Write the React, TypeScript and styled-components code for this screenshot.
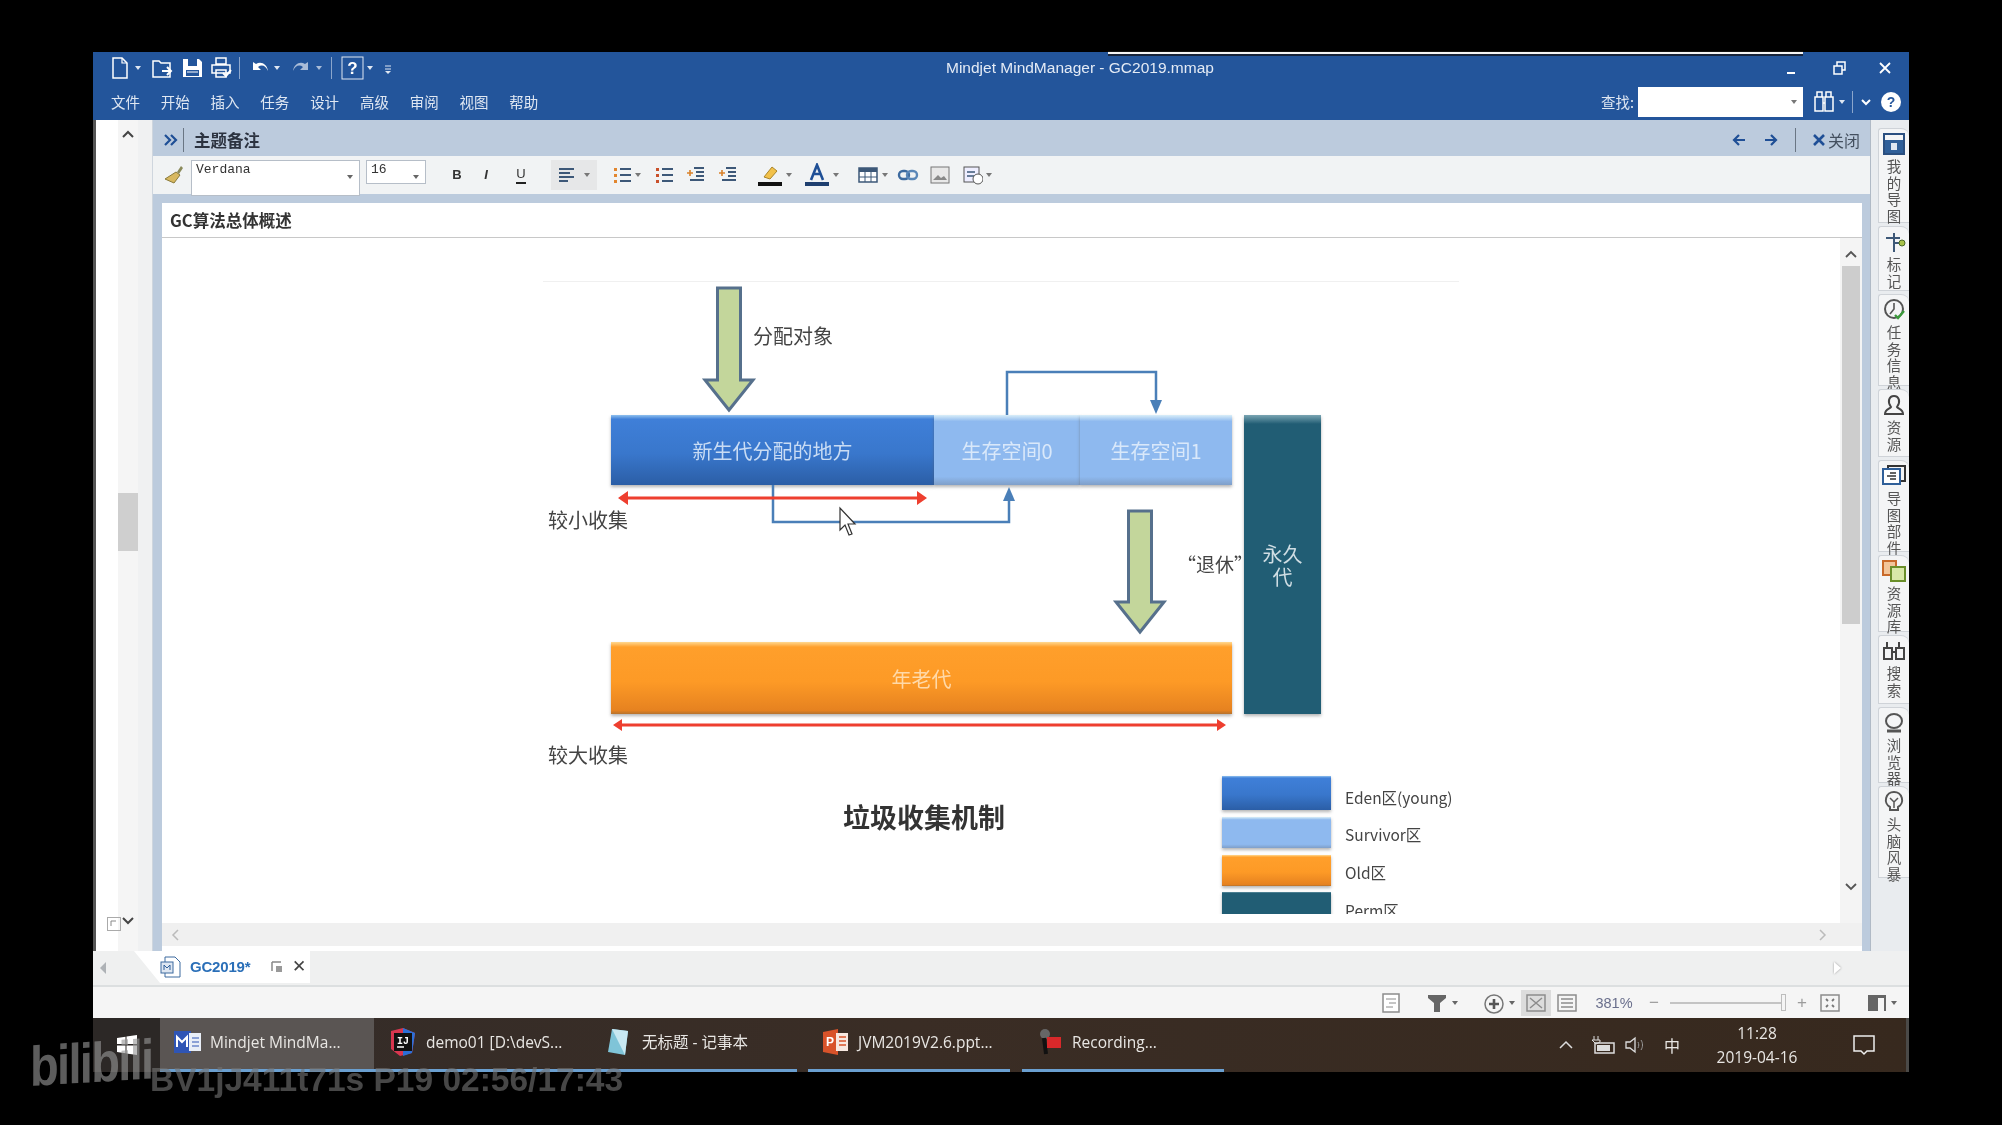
import React from 'react';
import styled, { createGlobalStyle } from 'styled-components';

const GlobalStyle = createGlobalStyle`
  html, body { margin: 0; padding: 0; background: #000; }
  body { width: 2002px; height: 1125px; overflow: hidden; font-family: "Liberation Sans", "Noto Sans CJK SC", sans-serif; }
`;

const CJK = `"Noto Sans CJK SC", "Liberation Sans", sans-serif`;

const Screen = styled.div`
  position: relative;
  width: 2002px;
  height: 1125px;
  padding: 52px 93px 53px 93px;
  box-sizing: border-box;
  background: #000;
  filter: blur(0.55px);
`;

const Win = styled.div`
  width: 1816px;
  height: 1020px;
  display: flex;
  flex-direction: column;
  background: #f2f3f3;
`;

const TopStripe = styled.div`
  position: absolute;
  left: 1108px;
  top: 51px;
  width: 695px;
  height: 5px;
  box-sizing: border-box;
  background: #f4f4f4;
  border-top: 1px solid #111;
  border-bottom: 2px solid #16233a;
`;

/* ---------- title and menu ---------- */
const TitleBar = styled.div`
  position: relative;
  height: 32px;
  flex: none;
  background: #23559b;
  display: flex;
  align-items: center;
  padding-left: 15px;
  color: #fff;
`;

const TitleText = styled.div`
  position: absolute;
  left: 853px;
  top: 6px;
  font: 15.5px/20px "Liberation Sans", sans-serif;
  color: #e4ebf5;
`;

const WinControls = styled.div`
  margin-left: auto;
  display: flex;
  align-items: center;
  gap: 28px;
  padding-right: 16px;
`;

const MenuBar = styled.div`
  height: 36px;
  flex: none;
  background: #23559b;
  display: flex;
  align-items: center;
  padding-left: 18px;
  padding-right: 8px;
`;

const MenuItem = styled.div`
  width: 49.8px;
  margin-right: 16.6px;
  flex: none;
  text-align: left;
  font: 14.5px/20px ${CJK};
  color: #dfe7f2;
  white-space: nowrap;
  & { width: 33.2px; }
`;

const FindLabel = styled.div`
  margin-left: auto;
  font: 14.5px/20px ${CJK};
  color: #dfe7f2;
`;

const FindBox = styled.div`
  width: 165px;
  height: 30px;
  margin-left: 4px;
  background: #fff;
  display: flex;
  align-items: center;
  justify-content: flex-end;
  padding-right: 6px;
  box-sizing: border-box;
`;

const Tri = styled.span<{ $c?: string; $ml?: number }>`
  display: inline-block;
  flex: none;
  width: 0;
  height: 0;
  margin-left: ${p => p.$ml ?? 0}px;
  border-left: 3.5px solid transparent;
  border-right: 3.5px solid transparent;
  border-top: 4px solid ${p => p.$c ?? '#dfe7f2'};
`;

const BarSep = styled.span<{ $c?: string; $h?: number; $mx?: number }>`
  display: inline-block;
  flex: none;
  width: 1px;
  height: ${p => p.$h ?? 22}px;
  margin: 0 ${p => p.$mx ?? 6}px;
  background: ${p => p.$c ?? '#8ba6cc'};
`;

/* ---------- main row ---------- */
const MainRow = styled.div`
  height: 831px;
  flex: none;
  display: flex;
  background: #e9ecef;
`;

const LeftRail = styled.div`
  width: 59px;
  flex: none;
  display: flex;
  background: #fff;
  border-left: 3px solid #555;
  box-sizing: border-box;
`;

const RailWhite = styled.div`
  width: 22px;
  flex: none;
  background: #fff;
`;

const RailTrack = styled.div`
  width: 20px;
  flex: none;
  position: relative;
  background: #f5f5f5;
  display: flex;
  flex-direction: column;
  align-items: center;
  padding-top: 8px;
  box-sizing: border-box;
`;

const RailThumb = styled.div`
  width: 20px;
  height: 58px;
  margin-top: 353px;
  background: #cfcfcf;
`;

const RailFoot = styled.div`
  margin-top: auto;
  padding-bottom: 24px;
`;

const RailCorner = styled.div`
  position: absolute;
  left: -20px;
  bottom: 0;
  width: 32px;
  height: 34px;
  display: flex;
  flex-direction: column;
  align-items: center;
  gap: 8px;
  color: #555;
  font: 11px/10px "Liberation Sans", sans-serif;
`;

const RailGap = styled.div`
  flex: 1;
  background: #f0f1f2;
`;

const NotePanel = styled.div`
  width: 1718px;
  flex: none;
  display: flex;
  flex-direction: column;
  background: #bccbdd;
  border-left: 1px solid #cfd6de;
  box-sizing: border-box;
`;

const NoteHeader = styled.div`
  height: 36px;
  flex: none;
  display: flex;
  align-items: center;
  padding: 3px 10px 0 10px;
  box-sizing: border-box;
  background: #bccbdd;
`;

const NoteHeading = styled.div`
  font: 700 16.5px/22px ${CJK};
  color: #2c3340;
  margin-left: 6px;
`;

const HeaderRight = styled.div`
  margin-left: auto;
  display: flex;
  align-items: center;
  gap: 16px;
  color: #44505f;
  font: 16px/20px ${CJK};
`;

const CloseGroup = styled.div`
  display: flex;
  align-items: center;
  gap: 2px;
`;

const FormatBar = styled.div`
  height: 38px;
  flex: none;
  display: flex;
  align-items: center;
  padding-left: 10px;
  background: #f1f3f4;
`;

const Select = styled.div<{ $w: number; $h: number }>`
  width: ${p => p.$w}px;
  height: ${p => p.$h}px;
  align-self: flex-start;
  margin-top: 4px;
  flex: none;
  box-sizing: border-box;
  position: relative;
  background: #fff;
  border: 1px solid #b6bec8;
  padding: 1px 4px;
  font: 13px/16px "Liberation Mono", monospace;
  color: #333;
`;

const SelectCaret = styled(Tri)`
  position: absolute;
  right: 6px;
  top: 14px;
`;

const Slot = styled.span<{ $w?: number; $ml?: number; $bg?: string }>`
  flex: none;
  display: inline-flex;
  align-items: center;
  justify-content: center;
  gap: 6px;
  width: ${p => p.$w ?? 20}px;
  height: 30px;
  margin-left: ${p => p.$ml ?? 0}px;
  background: ${p => p.$bg ?? 'transparent'};
`;

const FmtLetter = styled.span<{ $b?: boolean; $i?: boolean; $u?: boolean }>`
  font: ${p => (p.$b ? 700 : 400)} 13px/16px "Liberation Sans", sans-serif;
  font-style: ${p => (p.$i ? 'italic' : 'normal')};
  font-weight: ${p => (p.$i || p.$b ? 700 : 400)};
  color: #333;
  border-bottom: ${p => (p.$u ? '2px solid #222' : 'none')};
`;

const NoteCard = styled.div`
  margin: 9px 8px 0 9px;
  flex: 1;
  min-height: 0;
  display: flex;
  flex-direction: column;
  background: #fff;
`;

const NoteTitle = styled.div`
  height: 35px;
  flex: none;
  box-sizing: border-box;
  border-bottom: 1px solid #c8c8c8;
  padding: 6px 0 0 8px;
  font: 700 16.5px/22px ${CJK};
  color: #333;
`;

const NoteBodyRow = styled.div`
  height: 685px;
  flex: none;
  display: flex;
`;

const DiagramClip = styled.div`
  flex: 1;
  height: 676px;
  overflow: hidden;
`;

const Canvas = styled.div`
  position: relative;
  width: 1678px;
  height: 676px;
`;

const VScroll = styled.div`
  width: 22px;
  flex: none;
  display: flex;
  flex-direction: column;
  align-items: center;
  padding: 10px 0 6px;
  box-sizing: border-box;
  background: #f4f4f4;
`;

const VThumb = styled.div`
  width: 18px;
  height: 358px;
  margin-top: 6px;
  background: #cdcdcd;
`;

const HScroll = styled.div`
  height: 23px;
  flex: none;
  display: flex;
  align-items: center;
  justify-content: space-between;
  padding: 0 34px 0 8px;
  background: #f0f0f0;
`;

/* ---------- diagram parts, placed on the free canvas ---------- */
const OX = 162;
const OY = 238;

const Box = styled.div<{ $x: number; $y: number; $w: number; $h: number; $kind: string }>`
  position: absolute;
  left: ${p => p.$x - OX}px;
  top: ${p => p.$y - OY}px;
  width: ${p => p.$w}px;
  height: ${p => p.$h}px;
  display: flex;
  align-items: center;
  justify-content: center;
  text-align: center;
  font: 20px/23px ${CJK};
  box-shadow: 0 2px 3px rgba(90, 90, 90, 0.45);
  ${p =>
    p.$kind === 'eden' &&
    `background: linear-gradient(#8fc0ee 0, #3f7fd8 6%, #3977cc 55%, #2b5ea6 100%); color: #c9dcf4;`}
  ${p =>
    p.$kind === 'surv' &&
    `background: linear-gradient(#d9eef8 0, #8eb9ef 9%, #8eb9ef 88%, #7f9fc9 100%); color: #d9e8fa;`}
  ${p =>
    p.$kind === 'old' &&
    `background: linear-gradient(#ffd890 0, #ff9f2b 7%, #fd9a26 55%, #e68220 95%, #b7722c 100%); color: #ffd9a8;`}
  ${p =>
    p.$kind === 'perm' &&
    `background: linear-gradient(#7aa5b3 0, #215d74 3%, #215d74 100%); color: #cfdde3;`}
`;

const DiagramText = styled.div<{ $x: number; $y: number; $s?: number; $c?: string; $b?: boolean }>`
  position: absolute;
  left: ${p => p.$x - OX}px;
  top: ${p => p.$y - OY}px;
  font: ${p => (p.$b ? 600 : 400)} ${p => p.$s ?? 20}px/1 ${CJK};
  color: ${p => p.$c ?? '#444'};
  white-space: nowrap;
  transform: translateY(-50%);
`;

const Overlay = styled.svg`
  position: absolute;
  left: 0;
  top: 0;
  width: 1678px;
  height: 676px;
`;

const FaintRule = styled.div`
  position: absolute;
  left: ${543 - OX}px;
  top: ${281 - OY}px;
  width: 916px;
  height: 1px;
  background: #f0f0f0;
`;

/* ---------- right dock ---------- */
const RightDock = styled.div`
  flex: 1;
  display: flex;
  flex-direction: column;
  padding: 8px 0 0 7px;
  gap: 3px;
  background: #e9ecef;
  border-left: 1px solid #b0bac6;
`;

const DockTab = styled.div<{ $h: number }>`
  height: ${p => p.$h}px;
  box-sizing: border-box;
  background: #f4f5f6;
  border: 1px solid #cfd3d8;
  border-right: none;
  border-radius: 3px 8px 0 0;
  display: flex;
  flex-direction: column;
  align-items: center;
  padding-top: 3px;
  gap: 2px;
`;

const DockText = styled.div`
  width: 15px;
  font: 14.5px/16.5px ${CJK};
  color: #555;
  text-align: center;
`;

/* ---------- tabs and status ---------- */
const TabStrip = styled.div`
  height: 36px;
  flex: none;
  display: flex;
  align-items: flex-start;
  box-sizing: border-box;
  border-bottom: 2px solid #dcdfe0;
  background: #eff0f0;
  padding-left: 7px;
`;

const StripArrow = styled.div`
  width: 0;
  height: 0;
  margin-top: 11px;
  border-top: 6px solid transparent;
  border-bottom: 6px solid transparent;
  border-right: 6px solid #aeb2b6;
`;

const DocTab = styled.div`
  margin-left: 28px;
  width: 176px;
  height: 32px;
  display: flex;
  align-items: center;
  padding-left: 26px;
  box-sizing: border-box;
  background: #fff;
  clip-path: polygon(0 0, 100% 0, 100% 100%, 26px 100%);
  gap: 8px;
`;

const DocName = styled.div`
  font: 700 15px/18px "Liberation Sans", sans-serif;
  color: #2a6fb8;
  letter-spacing: -0.2px;
  margin-right: 12px;
`;

const TabClose = styled.div`
  font: 17px/18px "Liberation Sans", sans-serif;
  color: #444;
`;

const StripRight = styled.div`
  margin-left: auto;
  margin-right: 68px;
  margin-top: 11px;
  width: 0;
  height: 0;
  border-top: 6px solid transparent;
  border-bottom: 6px solid transparent;
  border-left: 7px solid #fff;
  filter: drop-shadow(0 0 1px #999);
`;

const StatusBar = styled.div`
  height: 31px;
  flex: none;
  display: flex;
  align-items: center;
  justify-content: flex-end;
  padding-right: 8px;
  background: #f5f5f5;
`;

const StatusSlot = styled.span<{ $w: number; $on?: boolean }>`
  width: ${p => p.$w}px;
  height: 26px;
  flex: none;
  display: inline-flex;
  align-items: center;
  justify-content: center;
  gap: 4px;
  background: ${p => (p.$on ? '#dcdcdc' : 'transparent')};
  color: #9c9c9c;
  font: 17px/20px "Liberation Sans", sans-serif;
`;

const ZoomText = styled.span`
  width: 62px;
  text-align: center;
  font: 14.5px/20px "Liberation Sans", sans-serif;
  color: #6a6f8c;
`;

const ZoomTrack = styled.div`
  width: 114px;
  height: 2px;
  position: relative;
  background: #c4c4c4;
  margin: 0 7px;
`;

const ZoomKnob = styled.div`
  position: absolute;
  right: -2px;
  top: -8px;
  width: 5px;
  height: 17px;
  box-sizing: border-box;
  background: #f5f5f5;
  border: 1px solid #bdbdbd;
`;

/* ---------- taskbar ---------- */
const Taskbar = styled.div`
  height: 54px;
  flex: none;
  display: flex;
  background: linear-gradient(90deg, #332c29 0, #3a2d25 45%, #37291e 100%);
  border-right: 3px solid #4b4a48;
  box-sizing: border-box;
  color: #e8e6e3;
`;

const StartBtn = styled.div`
  width: 67px;
  flex: none;
  display: flex;
  align-items: center;
  justify-content: center;
  background: #2c2826;
`;

const TaskItem = styled.div<{ $w: number; $active?: boolean; $line?: boolean; $ml?: number }>`
  width: ${p => p.$w}px;
  flex: none;
  margin-left: ${p => p.$ml ?? 0}px;
  box-sizing: border-box;
  display: flex;
  align-items: center;
  gap: 8px;
  padding: 0 0 3px 14px;
  background: ${p => (p.$active ? '#5a5553' : 'transparent')};
  border-bottom: 3px solid ${p => (p.$line ? '#6a9fd0' : 'transparent')};
  font: 15.5px/20px "Open Sans", "Noto Sans CJK SC", sans-serif;
  white-space: nowrap;
`;

const Tray = styled.div`
  margin-left: auto;
  display: flex;
  align-items: center;
  padding-right: 30px;
`;

const ImeLabel = styled.div`
  font: 16px/20px ${CJK};
  margin: 0 24px 0 16px;
`;

const Clock = styled.div`
  width: 106px;
  text-align: center;
  font: 15.5px/24px "Open Sans", sans-serif;
  margin-right: 42px;
`;

/* ---------- bilibili watermark ---------- */
const WmLogo = styled.div`
  position: absolute;
  left: 30px;
  top: 1036px;
  font: 700 56px/62px "Liberation Sans", sans-serif;
  letter-spacing: -2px;
  color: rgba(150, 150, 150, 0.62);
  transform: scaleX(0.84) skewY(-3deg);
  transform-origin: left center;
`;

const WmText = styled.div`
  position: absolute;
  left: 150px;
  top: 1061px;
  font: 700 33.5px/38px "Liberation Sans", sans-serif;
  color: rgba(115, 115, 115, 0.62);
  white-space: nowrap;
`;

/* ---------- icons ---------- */
const Ico = styled.svg<{ $ml?: number }>`
  flex: none;
  display: block;
  margin-left: ${p => p.$ml ?? 0}px;
`;

type IcoProps = { s?: number; ml?: number; children: React.ReactNode; w?: number };
const I = ({ s = 20, w, ml, children }: IcoProps) => (
  <Ico $ml={ml} width={w ?? s} height={s} viewBox={`0 0 ${w ?? s} ${s}`} fill="none">
    {children}
  </Ico>
);

const ListIcon = ({ kind }: { kind: 'num' | 'dot' | 'in' | 'out' }) => (
  <I s={20}>
    <path d={kind === 'in' || kind === 'out' ? 'M8 3h10M10 7h8M10 11h8M4 15h14' : 'M8 4h11M8 10h11M8 16h11'} stroke="#3d5878" strokeWidth="2" />
    {kind === 'num' && <path d="M2 3h3v3H2zM2 9h3v3H2zM2 15h3v3H2z" fill="#e2862e" />}
    {kind === 'dot' && <path d="M2 3h3v3H2zM2 9h3v3H2zM2 15h3v3H2z" fill="#c9502a" />}
    {(kind === 'in' || kind === 'out') && <path d="M1 8h6M4 5v6" stroke="#d9822b" strokeWidth="1.6" />}
  </I>
);

const Arrow = ({ x, top, bottom, shaft = 23, head = 48, headH = 30 }: { x: number; top: number; bottom: number; shaft?: number; head?: number; headH?: number }) => {
  const cx = x - OX;
  const t = top - OY;
  const b = bottom - OY;
  const pts = [
    [cx - shaft / 2, t],
    [cx + shaft / 2, t],
    [cx + shaft / 2, b - headH],
    [cx + head / 2, b - headH],
    [cx, b],
    [cx - head / 2, b - headH],
    [cx - shaft / 2, b - headH],
  ];
  return <polygon points={pts.map(p => p.join(',')).join(' ')} fill="#c3d69b" stroke="#56708c" strokeWidth="3" />;
};

const P = (x: number, y: number) => `${x - OX} ${y - OY}`;

const DOCK = [
  { h: 95, t: '我的导图', i: <><rect x="2" y="2" width="20" height="20" stroke="#2a4f80" strokeWidth="2" /><rect x="3" y="8" width="18" height="13" fill="#2f5f99" /><rect x="9" y="11" width="6" height="7" fill="#dfe7f2" /></> },
  { h: 65, t: '标记', i: <><path d="M4 8h14M12 3v19M12 13h8" stroke="#3d5878" strokeWidth="2" /><circle cx="20" cy="13" r="3" fill="#a8c24a" stroke="#4a6a2a" /></> },
  { h: 92, t: '任务信息', i: <><circle cx="12" cy="11" r="9" stroke="#555" strokeWidth="2" /><path d="M12 5v6l-4 5" stroke="#555" strokeWidth="1.6" /><path d="M13 17l3 3 6-7" stroke="#3a9a3a" strokeWidth="2.4" /></> },
  { h: 68, t: '资源', i: <path d="M3 21c0-5 5-5 6-7-4-5-2-11 3-11s7 6 3 11c1 2 6 2 6 7z" stroke="#444" strokeWidth="2" /> },
  { h: 92, t: '导图部件', i: <><rect x="6" y="2" width="17" height="15" stroke="#333" strokeWidth="2" /><rect x="1" y="5" width="17" height="15" fill="#fff" stroke="#2f5f99" strokeWidth="2" /><path d="M5 12h9M8 9h6M8 15h6" stroke="#333" strokeWidth="1.5" /></> },
  { h: 77, t: '资源库', i: <><rect x="1" y="2" width="13" height="14" fill="#f2c59a" stroke="#c96a2a" strokeWidth="2" /><rect x="9" y="8" width="14" height="14" fill="#d8e8a8" stroke="#6a8f2a" strokeWidth="2" /></> },
  { h: 69, t: '搜索', i: <path d="M5 3v5M17 3v5M2 9h8v11H2zM14 9h8v11h-8zM10 13h4" stroke="#444" strokeWidth="2" /> },
  { h: 76, t: '浏览器', i: <><ellipse cx="12" cy="10" rx="8" ry="7" stroke="#555" strokeWidth="2" /><path d="M5 20h14" stroke="#555" strokeWidth="3" /></> },
  { h: 92, t: '头脑风暴', i: <><path d="M12 2a8 8 0 0 0-4 15v3h8v-3a8 8 0 0 0-4-15z" stroke="#555" strokeWidth="2" /><path d="M8 8l4 4 4-4M12 12v6" stroke="#555" strokeWidth="1.5" /></> },
];

const MENUS = ['文件', '开始', '插入', '任务', '设计', '高级', '审阅', '视图', '帮助'];

export default function App() {
  return (
    <Screen>
      <GlobalStyle />
      <Win>
        <TitleBar>
          <I s={24}><path d="M5 2h9l5 5v15H5z" stroke="#fff" strokeWidth="1.5" /><path d="M14 2v5h5" stroke="#fff" strokeWidth="1.2" /></I>
          <Tri $ml={3} />
          <I s={24} ml={9}><path d="M3 5h6l2 2h9v14H3z" stroke="#fff" strokeWidth="1.5" /><path d="M12 15h9M17 11l4 4-4 4" stroke="#fff" strokeWidth="2" /></I>
          <I s={24} ml={6}><path d="M3 3h16l3 3v15H3z" fill="#fff" /><rect x="8" y="3" width="9" height="7" fill="#23559b" /><rect x="6" y="14" width="13" height="6" fill="#23559b" /><path d="M7 16h11" stroke="#fff" /></I>
          <I s={24} ml={5}><path d="M7 2h10v6H7zM3 9h18v8H3zM7 14h10v7H7z" fill="#23559b" stroke="#fff" strokeWidth="1.5" /><path d="M14 17l3 3 5-6" stroke="#fff" strokeWidth="2" /></I>
          <BarSep $mx={6} />
          <I s={22} ml={2}><path d="M5 5v8h8l-3-3c4-3 8-1 10 4-1-7-7-10-12-7z" fill="#fff" /></I>
          <Tri $ml={4} />
          <I s={22} ml={10}><path d="M18 5v8h-8l3-3C9 7 5 9 3 14c1-7 7-10 12-7z" fill="#a9bcd8" /></I>
          <Tri $ml={4} $c="#a9bcd8" />
          <BarSep $mx={9} />
          <I s={24}><rect x="1" y="1" width="21" height="22" stroke="#dfe7f2" /><text x="11.5" y="18" fontFamily="Liberation Sans" fontWeight="700" fontSize="17" fill="#fff" textAnchor="middle">?</text></I>
          <Tri $ml={2} />
          <I s={12} w={8} ml={11}><path d="M1 4h6M1 7h6" stroke="#dfe7f2" /><path d="M1 9l3 3 3-3" fill="#dfe7f2" /></I>
          <TitleText>Mindjet MindManager - GC2019.mmap</TitleText>
          <WinControls>
            <I s={16}><path d="M4 13h8" stroke="#fff" strokeWidth="2" /></I>
            <I s={16} ml={4}><path d="M3 6h8v8H3zM6 6V2h8v8h-3" stroke="#fff" strokeWidth="1.5" /></I>
            <I s={16} ml={2}><path d="M3 3l10 10M13 3L3 13" stroke="#fff" strokeWidth="1.8" /></I>
          </WinControls>
        </TitleBar>
        <MenuBar>
          {MENUS.map(m => (
            <MenuItem key={m}>{m}</MenuItem>
          ))}
          <FindLabel>查找:</FindLabel>
          <FindBox><Tri $c="#777" /></FindBox>
          <I s={24} ml={9}><path d="M5 2h5v5H5zM14 2h5v5h-5zM3 7h8v14H3zM13 7h8v14h-8zM11 13h2" stroke="#fff" strokeWidth="1.5" /></I>
          <Tri $ml={3} />
          <BarSep $mx={7} />
          <I s={12}><path d="M2 4l4 4 4-4" stroke="#fff" strokeWidth="2" /></I>
          <I s={20} ml={9}><circle cx="10" cy="10" r="10" fill="#fff" /><text x="10" y="15" fontFamily="Liberation Sans" fontWeight="700" fontSize="14" fill="#23559b" textAnchor="middle">?</text></I>
        </MenuBar>
        <MainRow>
          <LeftRail>
            <RailWhite />
            <RailTrack>
              <I s={12}><path d="M1 9l5-5 5 5" stroke="#444" strokeWidth="2" /></I>
              <RailThumb />
              <RailFoot><I s={12}><path d="M1 3l5 5 5-5" stroke="#444" strokeWidth="2" /></I></RailFoot>
              <RailCorner>
                <I s={14}><rect x="0.5" y="0.5" width="13" height="13" stroke="#aaa" /><path d="M4 9V4h5" stroke="#888" /></I>
              </RailCorner>
            </RailTrack>
            <RailGap />
          </LeftRail>
          <NotePanel>
            <NoteHeader>
              <I s={16}><path d="M2 3l5 5-5 5M8 3l5 5-5 5" stroke="#1f4f96" strokeWidth="2.2" /></I>
              <BarSep $c="#6a7684" $h={24} $mx={4} />
              <NoteHeading>主题备注</NoteHeading>
              <HeaderRight>
                <I s={16}><path d="M14 8H3M8 3L3 8l5 5" stroke="#1f4f96" strokeWidth="2.2" /></I>
                <I s={16}><path d="M2 8h11M8 3l5 5-5 5" stroke="#1f4f96" strokeWidth="2.2" /></I>
                <BarSep $c="#6a7684" $h={24} $mx={0} />
                <CloseGroup>
                  <I s={14}><path d="M2 2l10 10M12 2L2 12" stroke="#1f4f96" strokeWidth="2.6" /></I>
                  <span>关闭</span>
                </CloseGroup>
              </HeaderRight>
            </NoteHeader>
            <FormatBar>
              <I s={22}><path d="M14 8l4-6 2 2-4 6z" fill="#8a8a5a" /><path d="M13 8l4 3-6 8-9-4z" fill="#d8b860" stroke="#8a7a3a" /></I>
              <Slot $w={6} />
              <Select $w={169} $h={36}>Verdana<SelectCaret $c="#666" /></Select>
              <Slot $w={6} />
              <Select $w={60} $h={24}>16<SelectCaret $c="#666" /></Select>
              <Slot $ml={21}><FmtLetter $b>B</FmtLetter></Slot>
              <Slot $ml={9}><FmtLetter $i>I</FmtLetter></Slot>
              <Slot $ml={15}><FmtLetter $u>U</FmtLetter></Slot>
              <Slot $ml={20} $w={46} $bg="#e6e7e8">
                <I s={20}><path d="M1 4h15M1 8h11M1 12h15M1 16h9" stroke="#3d5878" strokeWidth="2" /></I>
                <Tri $c="#777" />
              </Slot>
              <Slot $ml={15}><ListIcon kind="num" /></Slot>
              <Tri $ml={3} $c="#777" />
              <Slot $ml={13}><ListIcon kind="dot" /></Slot>
              <Slot $ml={12}><ListIcon kind="in" /></Slot>
              <Slot $ml={12}><ListIcon kind="out" /></Slot>
              <Slot $ml={22}><I s={24}><path d="M6 14l8-10 5 4-7 8z" fill="#f2c14a" stroke="#a9852a" /><rect x="0" y="19" width="24" height="4" fill="#111" /></I></Slot>
              <Tri $ml={6} $c="#777" />
              <Slot $ml={15}><I s={24}><path d="M6 17L12 2l6 15M8.500 11h7" stroke="#1f4f96" strokeWidth="2.6" /><rect x="0" y="19" width="24" height="4" fill="#1f3f6f" /></I></Slot>
              <Tri $ml={6} $c="#777" />
              <Slot $ml={19}><I s={20}><path d="M1 3h18v14H1z" fill="#fff" stroke="#3d5878" strokeWidth="1.500" /><path d="M1 3h18v4H1z" fill="#3d5878" /><path d="M7 7v10M13 7v10M1 12h18" stroke="#3d5878" /></I></Slot>
              <Tri $ml={4} $c="#777" />
              <Slot $ml={10}><I s={22}><rect x="2" y="7" width="10" height="8" rx="4" stroke="#3d6a9f" strokeWidth="2.400" /><rect x="10" y="7" width="10" height="8" rx="4" stroke="#5a87b8" strokeWidth="2.400" /></I></Slot>
              <Slot $ml={12}><I s={20}><rect x="1" y="2" width="18" height="16" fill="#e8e8e8" stroke="#777" /><path d="M3 15l5-5 3 3 3-2 3 4z" fill="#888" /></I></Slot>
              <Slot $ml={13}><I s={20}><rect x="1" y="2" width="15" height="15" fill="#eef" stroke="#555" /><path d="M4 7h8M4 11h8" stroke="#3d5878" strokeWidth="1.500" /><circle cx="15" cy="14" r="5" fill="#fff" stroke="#555" /></I></Slot>
              <Tri $ml={3} $c="#777" />
            </FormatBar>
            <NoteCard>
              <NoteTitle>GC算法总体概述</NoteTitle>
              <NoteBodyRow>
                <DiagramClip>
                  <Canvas>
                    <FaintRule />
                    <Box $kind="eden" $x={611} $y={415} $w={323} $h={70}>新生代分配的地方</Box>
                    <Box $kind="surv" $x={934} $y={415} $w={146} $h={70}>生存空间0</Box>
                    <Box $kind="surv" $x={1080} $y={415} $w={152} $h={70}>生存空间1</Box>
                    <Box $kind="perm" $x={1244} $y={415} $w={77} $h={299}>永久<br />代</Box>
                    <Box $kind="old" $x={611} $y={642} $w={621} $h={72}>年老代</Box>
                    <Overlay viewBox="0 0 1678 676">
                      <Arrow x={729} top={288} bottom={410} />
                      <Arrow x={1140} top={511} bottom={632} />
                      <path d={`M${P(1007, 415)} L${P(1007, 372)} L${P(1156, 372)} L${P(1156, 410)}`} fill="none" stroke="#4a7fb8" strokeWidth="2.500" />
                      <path d={`M${P(1150, 400)} L${P(1156, 414)} L${P(1162, 400)}z`} fill="#4a7fb8" />
                      <path d={`M${P(773, 485)} L${P(773, 522)} L${P(1009, 522)} L${P(1009, 495)}`} fill="none" stroke="#4a7fb8" strokeWidth="2.500" />
                      <path d={`M${P(1003, 501)} L${P(1009, 487)} L${P(1015, 501)}z`} fill="#4a7fb8" />
                      <path d={`M${P(622, 498)} L${P(923, 498)}`} stroke="#ee3f2f" strokeWidth="3" />
                      <path d={`M${P(628, 491)} L${P(618, 498)} L${P(628, 505)}z M${P(917, 491)} L${P(927, 498)} L${P(917, 505)}z`} fill="#ee3f2f" />
                      <path d={`M${P(617, 725)} L${P(1222, 725)}`} stroke="#ee3f2f" strokeWidth="3" />
                      <path d={`M${P(622, 719)} L${P(613, 725)} L${P(622, 731)}z M${P(1217, 719)} L${P(1226, 725)} L${P(1217, 731)}z`} fill="#ee3f2f" />
                      <path d={`M${P(840, 508)} l0 22 l5 -5 l4 10 l3 -1 l-4 -10 l7 0 z`} fill="#fff" stroke="#333" strokeWidth="1.200" />
                    </Overlay>
                    <DiagramText $x={753} $y={336}>分配对象</DiagramText>
                    <DiagramText $x={548} $y={520}>较小收集</DiagramText>
                    <DiagramText $x={1177} $y={563} $s={19}>“退休”</DiagramText>
                    <DiagramText $x={548} $y={755}>较大收集</DiagramText>
                    <DiagramText $x={843} $y={816} $s={27} $c="#333" $b>垃圾收集机制</DiagramText>
                    <Box $kind="eden" $x={1222} $y={776} $w={109} $h={34} />
                    <Box $kind="surv" $x={1222} $y={817} $w={109} $h={31} />
                    <Box $kind="old" $x={1222} $y={855} $w={109} $h={31} />
                    <Box $kind="perm" $x={1222} $y={892} $w={109} $h={31} />
                    <DiagramText $x={1345} $y={798} $s={15.500}>Eden区(young)</DiagramText>
                    <DiagramText $x={1345} $y={835} $s={15.500}>Survivor区</DiagramText>
                    <DiagramText $x={1345} $y={873} $s={15.500}>Old区</DiagramText>
                    <DiagramText $x={1345} $y={911} $s={15.500}>Perm区</DiagramText>
                  </Canvas>
                </DiagramClip>
                <VScroll>
                  <I s={12}><path d="M1 9l5-5 5 5" stroke="#555" strokeWidth="1.800" /></I>
                  <VThumb />
                  <RailFoot><I s={12}><path d="M1 3l5 5 5-5" stroke="#555" strokeWidth="1.800" /></I></RailFoot>
                </VScroll>
              </NoteBodyRow>
              <HScroll>
                <I s={12}><path d="M8 1L3 6l5 5" stroke="#bbb" strokeWidth="1.500" /></I>
                <I s={12}><path d="M4 1l5 5-5 5" stroke="#bbb" strokeWidth="1.500" /></I>
              </HScroll>
            </NoteCard>
          </NotePanel>
          <RightDock>
            {DOCK.map(d => (
              <DockTab key={d.t} $h={d.h}>
                <I s={24}>{d.i}</I>
                <DockText>{d.t}</DockText>
              </DockTab>
            ))}
          </RightDock>
        </MainRow>
        <TabStrip>
          <StripArrow />
          <DocTab>
            <I s={22}><path d="M5 1h10l5 5v15H5z" fill="#fff" stroke="#3d6a9f" /><rect x="1" y="6" width="12" height="11" fill="#dfe7f2" stroke="#3d6a9f" /><path d="M4 14V9l3 3 3-3v5" stroke="#2f5f99" /></I>
            <DocName>GC2019*</DocName>
            <I s={14}><path d="M2 2h9M2 2v9" stroke="#888" strokeWidth="1.500" /><rect x="6" y="6" width="6" height="6" fill="#999" /></I>
            <TabClose>✕</TabClose>
          </DocTab>
          <StripRight />
        </TabStrip>
        <StatusBar>
          <StatusSlot $w={24}><I s={20}><rect x="2" y="1" width="16" height="18" fill="#fff" stroke="#8c8c8c" strokeWidth="1.500" /><path d="M5 6h10M8 10h7M5 14h7" stroke="#8c8c8c" /></I></StatusSlot>
          <StatusSlot $w={16} />
          <StatusSlot $w={46}><I s={22}><path d="M2 3h18v3l-6 5v9h-6v-9L2 6z" fill="#666" /></I><Tri $c="#666" /></StatusSlot>
          <StatusSlot $w={12} />
          <StatusSlot $w={44}><I s={22}><circle cx="11" cy="12" r="9" stroke="#777" strokeWidth="1.500" /><path d="M11 7v10M6 12h10" stroke="#555" strokeWidth="2.600" /></I><Tri $c="#666" /></StatusSlot>
          <StatusSlot $w={30} $on><I s={20}><rect x="1" y="2" width="18" height="16" stroke="#8c8c8c" strokeWidth="1.500" /><path d="M4 5l12 10M16 5L4 15" stroke="#8c8c8c" strokeWidth="1.500" /></I></StatusSlot>
          <StatusSlot $w={32}><I s={20}><rect x="1" y="2" width="18" height="16" stroke="#8c8c8c" strokeWidth="1.500" /><path d="M4 6h12M4 10h12M4 14h12" stroke="#8c8c8c" strokeWidth="1.500" /></I></StatusSlot>
          <ZoomText>381%</ZoomText>
          <StatusSlot $w={18}>−</StatusSlot>
          <ZoomTrack><ZoomKnob /></ZoomTrack>
          <StatusSlot $w={22}>+</StatusSlot>
          <StatusSlot $w={34}><I s={20}><rect x="1" y="2" width="18" height="16" stroke="#8c8c8c" strokeWidth="1.500" /><path d="M6 6l2 2M14 6l-2 2M6 14l2-2M14 14l-2-2" stroke="#777" strokeWidth="1.800" /></I></StatusSlot>
          <StatusSlot $w={16} />
          <StatusSlot $w={38}><I s={20}><rect x="1" y="2" width="18" height="16" fill="#666" /><rect x="11" y="5" width="6" height="13" fill="#f5f5f5" /></I><Tri $c="#666" /></StatusSlot>
        </StatusBar>
        <Taskbar>
          <StartBtn>
            <I s={22}><path d="M1 4l8.500-1.300V10H1zM10.500 2.500L21 1v9H10.500zM1 11.500h8.500v7.700L1 18zM10.500 11.500H21V21l-10.500-1.500z" fill="#fff" /></I>
          </StartBtn>
          <TaskItem $w={214} $active $line>
            <I s={28}><rect x="0" y="3" width="17" height="22" fill="#2f55b5" /><rect x="15" y="5" width="12" height="18" fill="#e8eef7" /><path d="M3 19V9l5 5 5-5v10" stroke="#fff" strokeWidth="2" /><path d="M18 10h7M18 14h7M18 18h7" stroke="#2f55b5" /></I>
            <span>Mindjet MindMa...</span>
          </TaskItem>
          <TaskItem $w={216} $line>
            <I s={30}><path d="M3 4l12-3 12 5-3 20-12 3L3 22z" fill="#d8364f" /><path d="M15 1l12 5-3 20-9 3z" fill="#2a6fd8" /><rect x="6" y="6" width="18" height="18" fill="#111" /><text x="9" y="17" fontFamily="Liberation Mono" fontWeight="700" fontSize="10" fill="#fff">IJ</text><path d="M9 20h7" stroke="#fff" strokeWidth="1.500" /></I>
            <span>demo01 [D:\devS...</span>
          </TaskItem>
          <TaskItem $w={207} $line>
            <I s={30}><path d="M8 2l16 2-3 24L4 25z" fill="#7fc4d8" /><path d="M8 2l16 2-3 24z" fill="#c8e8f2" /></I>
            <span>无标题 - 记事本</span>
          </TaskItem>
          <TaskItem $w={202} $ml={11} $line>
            <I s={28}><path d="M1 4l15-3v26L1 24z" fill="#d8532a" /><rect x="14" y="5" width="12" height="18" fill="#f7e8e0" /><path d="M17 9h7M17 13h7M17 17h7" stroke="#d8532a" strokeWidth="1.500" /><text x="4" y="18" fontFamily="Liberation Sans" fontWeight="700" fontSize="12" fill="#fff">P</text></I>
            <span>JVM2019V2.6.ppt...</span>
          </TaskItem>
          <TaskItem $w={202} $ml={12} $line>
            <I s={28}><circle cx="9" cy="6" r="5" fill="#666" /><path d="M8 10l2 16" stroke="#111" strokeWidth="4" /><rect x="11" y="9" width="14" height="11" fill="#d8282a" /></I>
            <span>Recording...</span>
          </TaskItem>
          <Tray>
            <I s={16}><path d="M2 11l6-6 6 6" stroke="#ddd" strokeWidth="1.500" /></I>
            <I s={20} w={24} ml={17}><rect x="4" y="8" width="19" height="10" stroke="#ddd" strokeWidth="1.500" /><rect x="6" y="10" width="13" height="6" fill="#ddd" /><path d="M3 1v4M7 1v4M1 5h8v2L5 9z" stroke="#ddd" /></I>
            <I s={20} w={24} ml={9}><path d="M2 7h4l5-4v14l-5-4H2z" stroke="#ddd" strokeWidth="1.300" /><path d="M14 7c1 2 1 4 0 6M17 5c2 3 2 7 0 10" stroke="#9a9a9a" /></I>
            <ImeLabel>中</ImeLabel>
            <Clock>11:28<br />2019-04-16</Clock>
            <I s={24}><path d="M2 3h20v15h-7l-3 3-3-3H2z" stroke="#eee" strokeWidth="1.500" /></I>
          </Tray>
        </Taskbar>
      </Win>
      <TopStripe />
      <WmLogo>bilibili</WmLogo>
      <WmText>BV1jJ411t71s P19 02:56/17:43</WmText>
    </Screen>
  );
}
